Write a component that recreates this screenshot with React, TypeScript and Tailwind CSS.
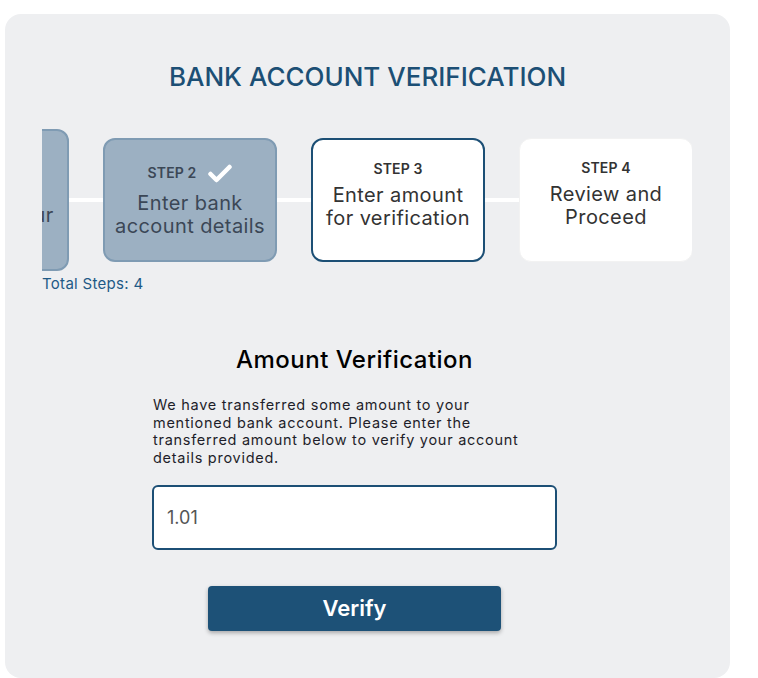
import React from 'react';

const font = { fontFamily: 'Inter, "Open Sans", sans-serif' };

type StepProps = {
  label: string;
  lines: string[];
  state: 'done' | 'current' | 'todo';
  tall?: boolean;
};

function Tick() {
  return (
    <svg width="24" height="19" viewBox="0 0 24 19" fill="none" className="text-white">
      <polyline
        points="2.5,10 8.5,16 21.5,3"
        stroke="currentColor"
        strokeWidth="4.5"
        strokeLinecap="round"
        strokeLinejoin="round"
      />
    </svg>
  );
}

function Step({ label, lines, state, tall }: StepProps) {
  const box =
    state === 'done'
      ? 'bg-[#9cb0c2] border-2 border-[#7f9bb3] text-[#3b4756]'
      : state === 'current'
        ? 'bg-white border-2 border-[#1c4f75] text-[#333]'
        : 'bg-white border border-[#f2f2f2] text-[#333]';
  return (
    <div
      className={`shrink-0 w-[174px] ${tall ? 'h-[142px] pt-[18px]' : 'h-[124px] pt-[20px]'} rounded-xl flex flex-col items-center text-center ${box}`}
    >
      <div
        className={`${state === 'done' ? 'h-[26px]' : 'h-[18px]'} flex items-center gap-[12px] text-[14px] leading-[18px] font-semibold uppercase tracking-[0.01em]`}
      >
        {label}
        {state === 'done' && <Tick />}
      </div>
      <div className="mt-[6px] text-[20px] leading-[23px] font-normal tracking-[0.02em] whitespace-nowrap">
        {lines.map((l) => (
          <div key={l}>{l}</div>
        ))}
      </div>
    </div>
  );
}

function Connector() {
  return <div className="shrink-0 w-[34px] h-[4px] bg-white" />;
}

export default function App() {
  return (
    <main className="min-h-screen bg-white pt-[14px] pl-[5px]" style={font}>
      <div className="w-[725px] h-[664px] bg-[#eeeff1] rounded-2xl pt-[47px]">
        <h1 className="text-center text-[26px] leading-[32px] font-medium text-[#1c4f75]">
          BANK ACCOUNT VERIFICATION
        </h1>

        <div className="ml-[37px] w-[650px] mt-[36px] overflow-hidden">
          <div className="-ml-[147px] flex items-center">
            <Step
              label="Step 1"
              lines={['Select bank', 'and enter your', 'details']}
              state="done"
              tall
            />
            <Connector />
            <Step label="Step 2" lines={['Enter bank', 'account details']} state="done" />
            <Connector />
            <Step label="Step 3" lines={['Enter amount', 'for verification']} state="current" />
            <Connector />
            <Step label="Step 4" lines={['Review and', 'Proceed']} state="todo" />
          </div>
        </div>
        <p className="ml-[37px] mt-[3px] text-[15px] leading-[20px] text-[#1f5a86] tracking-[0.02em]">
          Total Steps: 4
        </p>

        <div className="ml-[147px] w-[405px] mt-[51px] flex flex-col items-center">
          <h2 className="text-[24px] leading-[30px] font-medium text-black tracking-[0.02em]">
            Amount Verification
          </h2>
          <p className="self-start mt-[21px] ml-[1px] text-[14.5px] leading-[17.5px] text-[#1e1e2a] tracking-[0.05em]">
            We have transferred some amount to your
            <br />
            mentioned bank account. Please enter the
            <br />
            transferred amount below to verify your account
            <br />
            details provided.
          </p>
          <input
            defaultValue="1.01"
            className="mt-[19px] w-full h-[65px] rounded-md border-2 border-[#1c4f75] bg-white px-[13px] text-[18px] text-[#555] outline-none"
            style={font}
          />
          <button
            className="mt-[36px] w-[293px] h-[45px] rounded bg-[#1d5177] text-white text-[22px] font-semibold shadow-[0_2px_4px_rgba(0,0,0,0.3)]"
            style={font}
          >
            Verify
          </button>
        </div>
      </div>
    </main>
  );
}
